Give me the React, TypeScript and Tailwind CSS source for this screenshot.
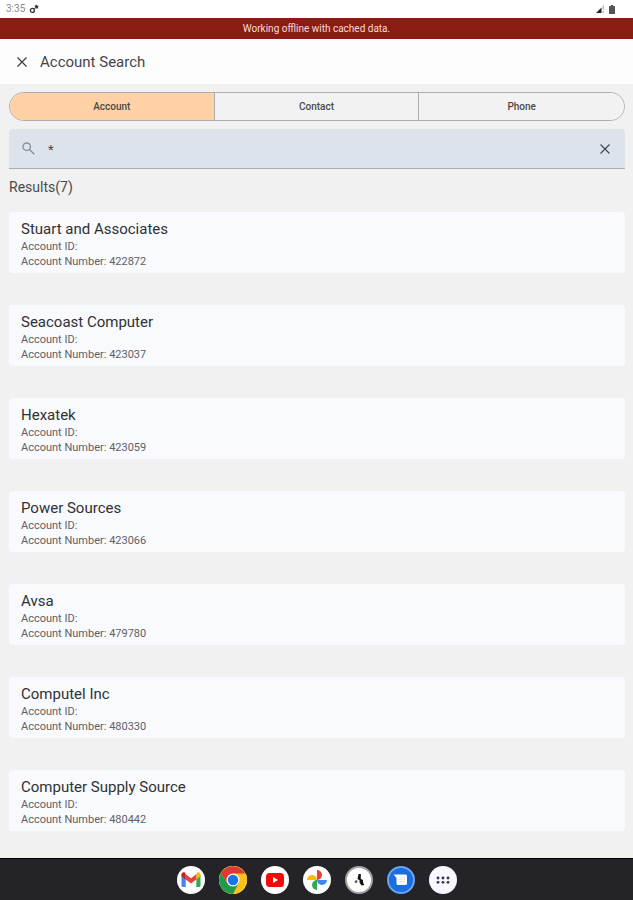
import { useState } from 'react';
import type { ReactNode } from 'react';

interface Account {
  name: string;
  id: string;
  number: string;
}

const accounts: Account[] = [
  { name: 'Stuart and Associates', id: '', number: '422872' },
  { name: 'Seacoast Computer', id: '', number: '423037' },
  { name: 'Hexatek', id: '', number: '423059' },
  { name: 'Power Sources', id: '', number: '423066' },
  { name: 'Avsa', id: '', number: '479780' },
  { name: 'Computel Inc', id: '', number: '480330' },
  { name: 'Computer Supply Source', id: '', number: '480442' },
];

const tabs = ['Account', 'Contact', 'Phone'];

function CloseIcon({ className }: { className: string }) {
  return (
    <svg viewBox="0 0 10 10" className={className} fill="none" stroke="currentColor" strokeWidth="1.2" aria-hidden="true">
      <path d="M0.5 0.5l9 9M9.5 0.5l-9 9" />
    </svg>
  );
}

function StatusBar() {
  return (
    <div className="flex h-[18px] items-center justify-between bg-white pl-1.5 pr-[18px]">
      <div className="flex items-center gap-1">
        <span className="text-[10px] leading-3 text-[#8a8a8a]">3:35</span>
        <svg viewBox="0 0 10 10" className="h-2.5 w-2.5" fill="none" aria-hidden="true">
          <circle cx="3.4" cy="6.4" r="2" stroke="#333" strokeWidth="1.3" />
          <path d="M4.8 5L6.5 3.2" stroke="#444" strokeWidth="1" />
          <path d="M5.6 1l1.2.6L8 .4l.3 1.4 1.4.2-.9 1.2.5 1.3-1.5-.3-1.2.7-.1-1.5z" fill="#333" />
        </svg>
      </div>
      <div className="flex items-center gap-1">
        <svg viewBox="0 0 9 8" className="h-2 w-[9px]" aria-hidden="true">
          <path d="M0 8L5.5 2.5V8z" fill="#222" />
          <path d="M6.5 1.5L8 0v4.500H6.500zM6.500 6H8v2H6.500z" fill="#bbb" />
        </svg>
        <svg viewBox="0 0 6 9" className="h-[9px] w-1.5" aria-hidden="true">
          <path d="M2 0h2v1h1.5q.5 0 .5.5v7q0 .5-.5.5h-5Q0 9 0 8.500v-7Q0 1 .5 1H2z" fill="#555" />
        </svg>
      </div>
    </div>
  );
}

function AccountCard({ account }: { account: Account }) {
  return (
    <li className="rounded-sm bg-[#f8fafe] px-3 pt-[7px] pb-1">
      <h2 className="text-[15px] leading-5 text-[#303134]">{account.name}</h2>
      <p className="text-[11px] leading-[15px] text-[#5f6064]">Account ID: {account.id}</p>
      <p className="text-[11px] leading-[15px] text-[#5f6064]">Account Number: {account.number}</p>
    </li>
  );
}

function DockButton({ label, className, children }: { label: string; className: string; children: ReactNode }) {
  return (
    <button type="button" aria-label={label} className={`flex h-7 w-7 items-center justify-center rounded-full ${className}`}>
      {children}
    </button>
  );
}

function Dock() {
  return (
    <nav aria-label="Apps" className="flex h-[42px] items-center justify-center gap-3.5 border-t border-black bg-[#242428]">
      <DockButton label="Gmail" className="bg-white">
        <svg viewBox="0 0 20 15" className="h-[15px] w-5">
          <path d="M0.500 3v10.500q0 1.500 1.500 1.500h2.700V6.500z" fill="#4285f4" />
          <path d="M19.500 3v10.500q0 1.500-1.500 1.500h-2.700V6.500z" fill="#34a853" />
          <path d="M15.300 2.200v5.200l4.200-3.200V2.400c0-2-2.200-2.800-3.600-1.700z" fill="#fbbc04" />
          <path d="M4.700 7.400V2.200L10 6.200l5.300-4v5.200L10 11.400z" fill="#ea4335" />
          <path d="M.5 2.400v1.800l4.200 3.200V2.200L4.100.7C2.700-.4.500.4.500 2.400z" fill="#c5221f" />
        </svg>
      </DockButton>
      <DockButton label="Chrome" className="bg-white">
        <svg viewBox="0 0 28 28" className="h-7 w-7">
          <circle cx="14" cy="14" r="14" fill="#fbc116" />
          <path d="M14 14L8.400 17.250L1.880 7A14 14 0 0 0 14 28L19.600 17.250z" fill="#1e9b4b" />
          <path d="M14 7.500H26.120A14 14 0 0 0 1.880 7L8.400 17.250L14 14z" fill="#dc3a2e" />
          <circle cx="14" cy="14" r="6.500" fill="#fff" />
          <circle cx="14" cy="14" r="5.200" fill="#1a73e8" />
        </svg>
      </DockButton>
      <DockButton label="YouTube" className="bg-white">
        <svg viewBox="0 0 18 14" className="h-3.5 w-[18px]">
          <rect width="18" height="14" rx="3.500" fill="#f50808" />
          <path d="M7 4l5 3-5 3z" fill="#fff" />
        </svg>
      </DockButton>
      <DockButton label="Photos" className="bg-white">
        <svg viewBox="0 0 20 20" className="h-5 w-5">
          <path d="M10 0a5 5 0 0 1 0 10z" fill="#ea4335" />
          <path d="M20 10a5 5 0 0 1-10 0z" fill="#4285f4" />
          <path d="M10 20a5 5 0 0 1 0-10z" fill="#34a853" />
          <path d="M0 10a5 5 0 0 1 10 0z" fill="#fbbc04" />
        </svg>
      </DockButton>
      <DockButton label="Clock" className="border-2 border-[#a5a5a8] bg-white">
        <svg viewBox="0 0 16 16" className="h-4 w-4">
          <path d="M7.500 2h2.300v5l2.200 1v2.500l1.300 2.500-2.800.5L8.500 10.500V8L6.500 7.200z" fill="#111" />
          <path d="M3.500 9L6.300 8v2.500L4 11z" fill="#555" />
        </svg>
      </DockButton>
      <DockButton label="Messages" className="border-2 border-[#6ba3ee] bg-[#1a6fdf]">
        <svg viewBox="0 0 15 12" className="h-3 w-[15px]">
          <path d="M.5.5H12.500Q14 .5 14 2v7.500q0 1.500-1.500 1.500H5q-1.500 0-1.500-1.500V4z" fill="#fff" />
          <path d="M5.500 3.700h6.500M5.500 5.700h6.500M5.500 7.700h6.500" stroke="#d3e4fb" strokeWidth=".8" />
        </svg>
      </DockButton>
      <DockButton label="All apps" className="bg-[#f7f7fd]">
        <svg viewBox="0 0 14 8" className="h-2 w-3.5" fill="#33335c">
          <circle cx="2" cy="2" r="1.400" />
          <circle cx="7" cy="2" r="1.400" />
          <circle cx="12" cy="2" r="1.400" />
          <circle cx="2" cy="6.300" r="1.400" />
          <circle cx="7" cy="6.300" r="1.400" />
          <circle cx="12" cy="6.300" r="1.400" />
        </svg>
      </DockButton>
    </nav>
  );
}

export default function App() {
  const [activeTab, setActiveTab] = useState('Account');
  const [query, setQuery] = useState('*');

  return (
    <div className="flex min-h-screen flex-col bg-[#f1f1f1] font-[Roboto,sans-serif]">
      <StatusBar />
      <div role="status" className="bg-[#8c1c13] text-center text-[10px] leading-[21px] text-[#f5dcd9]">
        Working offline with cached data.
      </div>

      <header className="flex h-[45px] items-center gap-3 bg-[#fdfdfe] px-4">
        <button type="button" aria-label="Close" className="flex h-3 w-3 items-center justify-center text-[#3c3c3e]">
          <CloseIcon className="h-2.5 w-2.5" />
        </button>
        <h1 className="text-[15px] leading-5 text-[#454548]">Account Search</h1>
      </header>

      <main className="flex-1 pl-[9px] pr-2 pt-2">
        <div role="tablist" className="grid h-[29px] grid-cols-3 divide-x divide-[#acacac] overflow-hidden rounded-full border border-[#acacac]">
          {tabs.map((tab) => (
            <button
              key={tab}
              type="button"
              role="tab"
              aria-selected={tab === activeTab}
              onClick={() => setActiveTab(tab)}
              className={`text-[10px] font-medium text-[#4a4a4a] ${tab === activeTab ? 'bg-[#ffd1a4]' : 'bg-[#f2f2f2]'}`}
            >
              {tab}
            </button>
          ))}
        </div>

        <div className="mt-2 flex h-10 items-center rounded-t-sm border-b border-[#a9adb3] bg-[#dde3eb] pl-[13px] pr-3.5">
          <svg viewBox="0 0 13 13" className="h-[13px] w-[13px] text-[#8b9098]" fill="none" stroke="currentColor" strokeWidth="1.4" aria-hidden="true">
            <circle cx="4.700" cy="4.700" r="3.700" />
            <path d="M7.500 7.500l4.800 4.800" />
          </svg>
          <input
            type="text"
            aria-label="Search accounts"
            value={query}
            onChange={(e) => setQuery(e.target.value)}
            className="ml-[13px] min-w-0 flex-1 bg-transparent pt-0.5 text-[13px] leading-5 text-[#45474b] outline-none"
          />
          <button type="button" aria-label="Clear search" onClick={() => setQuery('')} className="flex h-3 w-3 items-center justify-center text-[#45484e]">
            <CloseIcon className="h-2.5 w-2.5" />
          </button>
        </div>

        <p className="mt-2 text-sm leading-5 text-[#4a4a4c]">Results({accounts.length})</p>

        <ul className="mb-6 mt-[15px] flex flex-col gap-8">
          {accounts.map((account) => (
            <AccountCard key={account.number} account={account} />
          ))}
        </ul>
      </main>

      <Dock />
    </div>
  );
}
